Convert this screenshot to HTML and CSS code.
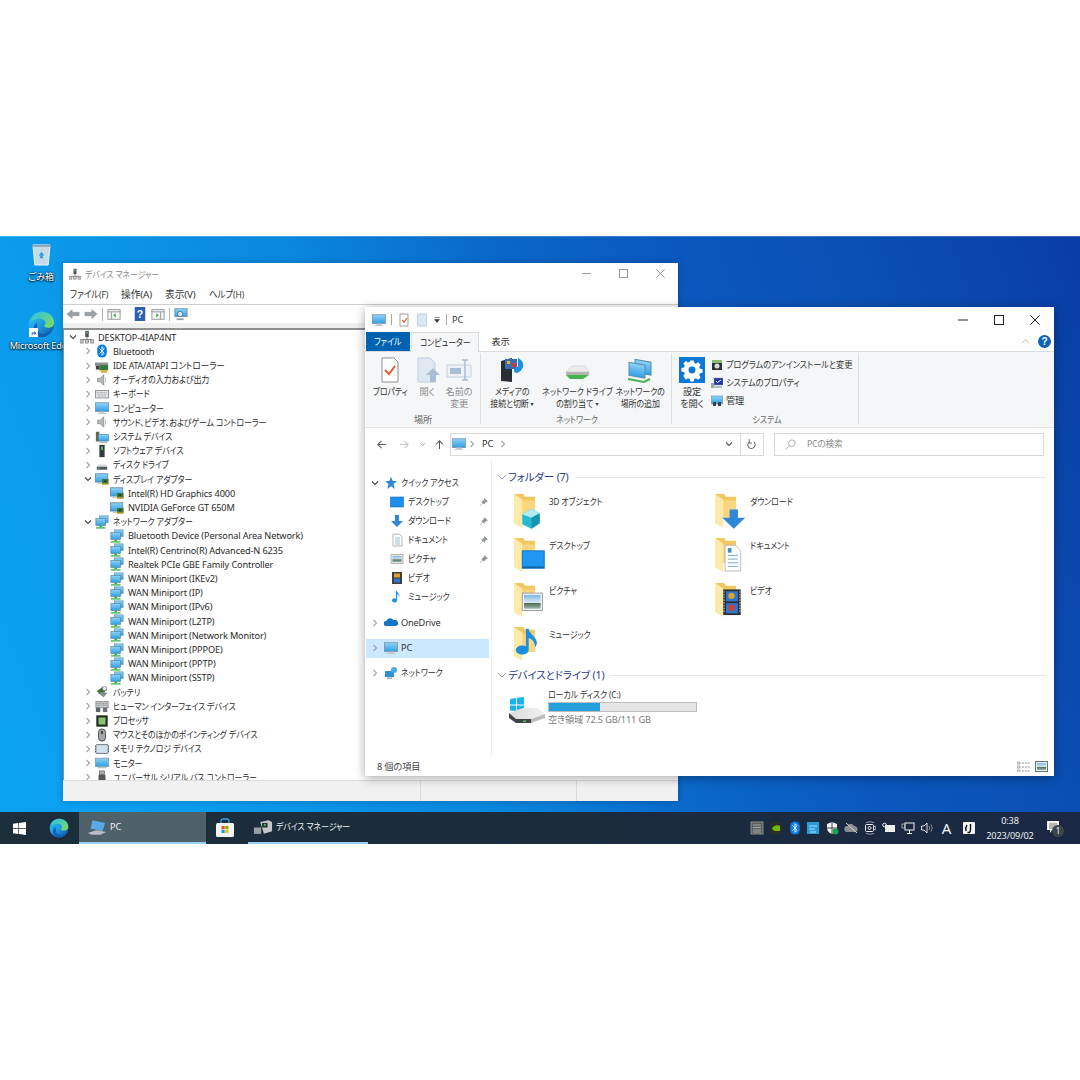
FILE: index.html
```html
<!DOCTYPE html>
<html lang="ja">
<head>
<meta charset="utf-8">
<title>デバイス マネージャー と PC</title>
<link rel="stylesheet" href="styles.css">
</head>
<body>
<svg class="defs" xmlns="http://www.w3.org/2000/svg">
  <defs>
    <linearGradient id="scr" x1="0" y1="0" x2="0" y2="1"><stop offset="0" stop-color="#8fd3f7"/><stop offset="1" stop-color="#2f9fe6"/></linearGradient>
    <linearGradient id="edgeg" x1="0" y1="0" x2="1" y2="1"><stop offset="0" stop-color="#35c1f1"/><stop offset=".5" stop-color="#1b9de2"/><stop offset="1" stop-color="#114a9a"/></linearGradient>
    <linearGradient id="edgeh" x1="0" y1="0" x2="1" y2="1"><stop offset="0" stop-color="#2bc4e8"/><stop offset="1" stop-color="#7fdc5a"/></linearGradient>
    <linearGradient id="hdd" x1="0" y1="0" x2="1" y2="0"><stop offset="0" stop-color="#dcdcdc"/><stop offset="1" stop-color="#f1f1f1"/></linearGradient>
    <linearGradient id="pic" x1="0" y1="0" x2="0" y2="1"><stop offset="0" stop-color="#7db8e6"/><stop offset=".55" stop-color="#d8e8ef"/><stop offset=".6" stop-color="#4d6b55"/><stop offset="1" stop-color="#9fb6b0"/></linearGradient>

    <symbol id="chr" viewBox="0 0 8 8"><path d="M2.500 1 5.500 4 2.500 7" fill="none" stroke="#a3a3a3" stroke-width="1.100"/></symbol>
    <symbol id="chd" viewBox="0 0 8 8"><path d="M1 2.500 4 5.500 7 2.500" fill="none" stroke="#444" stroke-width="1.100"/></symbol>
    <symbol id="chg" viewBox="0 0 10 10"><path d="M1 3 5 7 9 3" fill="none" stroke="#8a93a8" stroke-width=".9"/></symbol>

    <symbol id="mon" viewBox="0 0 16 16"><rect x=".5" y="2" width="15" height="10" fill="url(#scr)" stroke="#7c98ad"/><rect x="5" y="12" width="6" height="1.500" fill="#b4bec6"/><rect x="3" y="13.500" width="10" height="1.500" fill="#c8ced3"/></symbol>
    <symbol id="net" viewBox="0 0 16 16"><rect x="5" y="1" width="10" height="7.500" fill="url(#scr)" stroke="#6c93ad" stroke-width=".8"/><rect x="1" y="4" width="11" height="8" fill="url(#scr)" stroke="#5e87a3" stroke-width=".8"/><rect x="5" y="12" width="3" height="2" fill="#3fae3f"/><rect x="1" y="14" width="11" height="1.500" fill="#39b54a"/></symbol>
    <symbol id="disp" viewBox="0 0 16 16"><rect x=".5" y="2" width="14" height="9.500" fill="url(#scr)" stroke="#6a8aa0"/><rect x="3" y="11.500" width="7" height="2" fill="#b4bec6"/><rect x="8" y="8" width="7.500" height="6" fill="#3c7a3a"/><rect x="8" y="13" width="7.500" height="1.500" fill="#d6a520"/><rect x="10" y="9.500" width="3" height="2" fill="#1f3f1f"/></symbol>
    <symbol id="spk" viewBox="0 0 16 16"><path d="M3 6h3l4-4v12l-4-4H3z" fill="#b5b9bc" stroke="#70767b" stroke-width=".7"/><path d="M12 5v6" stroke="#c6c9cc" stroke-width="1.200"/></symbol>
    <symbol id="bt" viewBox="0 0 16 16"><rect x="2.500" y=".5" width="11" height="15" rx="5.500" fill="#0a7ce8"/><path d="M5 5l5.500 5.500L8 13V3l2.500 2.500L5 11" fill="none" stroke="#fff" stroke-width="1"/></symbol>
    <symbol id="ide" viewBox="0 0 16 16"><rect x="0" y="4" width="15" height="4" fill="#8d9196"/><rect x="5" y="7" width="10" height="6" fill="#2f7a3a"/><rect x="7" y="13" width="7" height="2.500" fill="#e4a21c"/><rect x="1" y="8" width="4" height="4" fill="#3b3f44"/></symbol>
    <symbol id="kb" viewBox="0 0 16 16"><rect x=".5" y="4" width="15" height="8.500" fill="#e6e7e8" stroke="#8a8d90"/><path d="M2 6.200h12M2 8.200h12M3 10.400h10" stroke="#8e9193" stroke-dasharray="1 .7"/></symbol>
    <symbol id="sys" viewBox="0 0 16 16"><rect x="1" y="2" width="4" height="11" fill="#5f6b4f"/><rect x="4" y="5" width="11.500" height="7.500" fill="url(#scr)" stroke="#4d7f9e" stroke-width=".7"/><rect x="5" y="13" width="9" height="1.600" fill="#9aa9b3"/></symbol>
    <symbol id="sw" viewBox="0 0 16 16"><rect x="5" y="1" width="6" height="14" fill="#34383c"/><rect x="7" y="3" width="2" height="4" fill="#49d24e"/></symbol>
    <symbol id="dsk" viewBox="0 0 16 16"><path d="M2 10 4 7.500h8L14 10z" fill="#d5d7d9"/><rect x="2" y="10" width="12" height="3.400" fill="#50565b"/><rect x="3" y="11.200" width="2" height="1" fill="#7fd37f"/></symbol>
    <symbol id="bat" viewBox="0 0 16 16"><path d="M2 7 9 2l5 3-7 6z" fill="#3a6e35"/><path d="M3 9l7 5 4-5-4-1z" fill="#888d8f"/><circle cx="11" cy="4" r="2.500" fill="#e8eef0" stroke="#55595c" stroke-width=".6"/></symbol>
    <symbol id="hid" viewBox="0 0 16 16"><rect x="1" y="3" width="14" height="7" fill="#c9ccce" stroke="#6a6e72" stroke-width=".7"/><path d="M2 5h12M2 7h12" stroke="#777" stroke-dasharray="1 .8"/><rect x="1" y="10" width="5" height="5" fill="#5b6268"/><rect x="9" y="10" width="5" height="5" fill="#68727a"/></symbol>
    <symbol id="cpu" viewBox="0 0 16 16"><rect x="1.500" y="1.500" width="13" height="13" fill="#232d22"/><rect x="4" y="4" width="8" height="8" fill="#86c46f"/></symbol>
    <symbol id="mou" viewBox="0 0 16 16"><rect x="4" y="1" width="8" height="14" rx="4" fill="#a2a8ad" stroke="#3d4144"/><rect x="7" y="3" width="2" height="4" rx="1" fill="#2f3336"/></symbol>
    <symbol id="mem" viewBox="0 0 16 16"><rect x="1" y="3" width="14" height="10" rx="1" fill="#cfe3ee" stroke="#60686e"/><path d="M0 5h1M0 8h1M0 11h1M15 5h1M15 8h1M15 11h1" stroke="#33383c"/></symbol>
    <symbol id="scrn" viewBox="0 0 16 16"><rect x=".5" y="2.500" width="15" height="9.500" fill="url(#scr)" stroke="#79a0ba"/><rect x="3" y="12.500" width="10" height="1.600" fill="#b8c2ca"/></symbol>
    <symbol id="usb" viewBox="0 0 16 16"><rect x="5" y="1" width="6" height="4" fill="#a8acb0" stroke="#45494c" stroke-width=".6"/><rect x="4" y="5" width="8" height="10" rx="1.500" fill="#55595d"/></symbol>
    <symbol id="dm" viewBox="0 0 16 16"><rect x="6" y="1" width="4" height="7" fill="#4b5054"/><rect x="7" y="2" width="2" height="2" fill="#5cc45c"/><path d="M8 8v3M2 11h12" stroke="#777"/><rect x="0" y="11" width="4" height="4" fill="#bdbdbd" stroke="#666" stroke-width=".5"/><rect x="6" y="11" width="4" height="4" fill="#bdbdbd" stroke="#666" stroke-width=".5"/><rect x="12" y="11" width="4" height="4" fill="#bdbdbd" stroke="#666" stroke-width=".5"/></symbol>

    <symbol id="folder" viewBox="0 0 36 40"><path d="M0 2h10l2 3h11v24H0z" fill="#f0c862"/><path d="M8 9h15v20H8z" fill="#f7d67f"/><path d="M0 2l9 6v31l-9-5z" fill="#fde9a8"/></symbol>
    <symbol id="edge" viewBox="0 0 32 32"><circle cx="16" cy="16" r="15" fill="url(#edgeg)"/><path d="M3 12C5 4 12 1 17 1c8 0 14 6 14 13 0 4-3 6-7 6-3 0-5-1-5-3 2-1 2-3 1-5-2-3-7-4-11-2-3 1-5 2-6 2z" fill="url(#edgeh)"/><path d="M11 20c0 4 3 7 8 7 3 0 5-1 7-2-2 4-6 6-10 6-4 0-7-2-9-5-2-4 0-10 4-12-1 2 0 4 0 6z" fill="#0e5fb8"/></symbol>
    <symbol id="win" viewBox="0 0 16 16"><path d="M0 2.200 6.600 1.300V7.500H0zM7.400 1.200 16 0V7.500H7.400zM0 8.400H6.600V14.700L0 13.800zM7.400 8.400H16V16L7.400 14.800z" fill="#fff"/></symbol>
    <symbol id="gear" viewBox="0 0 24 24"><path fill="#fff" fill-rule="evenodd" d="M10 1h4l.6 3 2 .9 2.600-1.700 2.800 2.800-1.700 2.600.9 2 3 .6v4l-3 .6-.9 2 1.700 2.600-2.800 2.800-2.600-1.700-2 .9-.6 3h-4l-.6-3-2-.9-2.600 1.700L2 18.900l1.700-2.600-.9-2-3-.6v-4l3-.6.9-2L2 4.400 4.800 1.600l2.600 1.700 2-.9zM12 8a4 4 0 1 0 0 8 4 4 0 0 0 0-8z" transform="translate(2.400 2.400) scale(.8)"/></symbol>
    <symbol id="pinm" viewBox="0 0 8 8"><path d="M5 .5 7.500 3 6 3.500 4.500 5.500 2.500 3.500 4.500 2zM3.500 4.500 1 7" fill="#8d959d" stroke="#8d959d" stroke-width=".6"/></symbol>
  </defs>
</svg>

<main class="screen">
  <section class="desktop">
    <div class="desk-icon recycle">
      <svg class="recycle-ic" viewBox="0 0 22 24"><path d="M2 2h18l-2 21H4z" fill="#c6dbe8" stroke="#eef5f9"/><path d="M1 2h20v2H1z" fill="#8ea3b3"/><path d="M8 13l3-4 3 4-2 0 1 3H9l1-3z" fill="#2f9fd8"/></svg>
      <span class="desk-label">ごみ箱</span>
    </div>
    <div class="desk-icon edge-shortcut">
      <span class="edge-box"><svg class="edge-ic"><use href="#edge"/></svg><svg class="shortcut" viewBox="0 0 10 10"><rect width="10" height="10" fill="#fff"/><path d="M3 8V5h3V3l2 3-2 2V6H4v2z" fill="#1a5fb0"/></svg></span>
      <span class="desk-label">Microsoft Edge</span>
    </div>

    <article class="window devmgr">
      <header class="dm-title">
        <svg class="ic12"><use href="#dm"/></svg>
        <span class="dm-title-text ja">デバイス マネージャー</span>
        <span class="spacer"></span>
        <span class="ctl-row dm-ctl">
          <svg class="ctl" viewBox="0 0 10 10"><path d="M0 5h10" stroke="#8d8d8d"/></svg>
          <svg class="ctl" viewBox="0 0 10 10"><rect x=".5" y=".5" width="9" height="9" fill="none" stroke="#8d8d8d"/></svg>
          <svg class="ctl" viewBox="0 0 10 10"><path d="M.5.5l9 9M9.500.5l-9 9" stroke="#8d8d8d"/></svg>
        </span>
      </header>
      <nav class="dm-menu"><span class="ja">ファイル(F)</span><span>操作(A)</span><span>表示(V)</span><span class="ja">ヘルプ(H)</span></nav>
      <div class="dm-tools">
        <svg class="tool" viewBox="0 0 16 16"><path d="M1 8l6-5v3h8v4H7v3z" fill="#9aa0a4" stroke="#7b8084" stroke-width=".5"/></svg>
        <svg class="tool" viewBox="0 0 16 16"><path d="M15 8 9 3v3H1v4h8v3z" fill="#9aa0a4" stroke="#7b8084" stroke-width=".5"/></svg>
        <i class="tsep"></i>
        <svg class="tool" viewBox="0 0 16 16"><rect x="1" y="3" width="14" height="11" fill="#f4f4f4" stroke="#8d9093"/><path d="M1 5.500h14M5 5.500V14" stroke="#8d9093"/><path d="M7 9.500l3-2.500v5z" fill="#45a845"/></svg>
        <svg class="tool help" viewBox="0 0 16 16"><rect x="2" y="0" width="12" height="16" fill="#2d5fb5"/><text x="8" y="13" text-anchor="middle" font-size="12" font-weight="700" fill="#fff" font-family="Liberation Sans">?</text></svg>
        <svg class="tool" viewBox="0 0 16 16"><rect x="1" y="3" width="14" height="11" fill="#f4f4f4" stroke="#8d9093"/><path d="M1 5.500h14M11 5.500V14" stroke="#8d9093"/><path d="M9 9.500 6 7v5z" fill="#45a845"/></svg>
        <i class="tsep"></i>
        <svg class="tool" viewBox="0 0 16 16"><rect x="1" y="2" width="14" height="9" fill="url(#scr)" stroke="#6d93ad"/><path d="M3 14h8" stroke="#93a0aa" stroke-width="2"/><circle cx="7" cy="8" r="3" fill="#d7ecf8" stroke="#57738a"/></svg>
      </div>
      <div class="dm-tree">
        <div class="row"><svg class="chev"><use href="#chd"/></svg><svg class="ic"><use href="#dm"/></svg><span>DESKTOP-4IAP4NT</span></div>
        <div class="row l1"><svg class="chev"><use href="#chr"/></svg><svg class="ic"><use href="#bt"/></svg><span>Bluetooth</span></div>
        <div class="row l1"><svg class="chev"><use href="#chr"/></svg><svg class="ic"><use href="#ide"/></svg><span class="jm">IDE ATA/ATAPI コントローラー</span></div>
        <div class="row l1"><svg class="chev"><use href="#chr"/></svg><svg class="ic"><use href="#spk"/></svg><span class="ja">オーディオの入力および出力</span></div>
        <div class="row l1"><svg class="chev"><use href="#chr"/></svg><svg class="ic"><use href="#kb"/></svg><span class="ja">キーボード</span></div>
        <div class="row l1"><svg class="chev"><use href="#chr"/></svg><svg class="ic"><use href="#mon"/></svg><span class="ja">コンピューター</span></div>
        <div class="row l1"><svg class="chev"><use href="#chr"/></svg><svg class="ic"><use href="#spk"/></svg><span class="ja">サウンド、ビデオ、およびゲーム コントローラー</span></div>
        <div class="row l1"><svg class="chev"><use href="#chr"/></svg><svg class="ic"><use href="#sys"/></svg><span class="ja">システム デバイス</span></div>
        <div class="row l1"><svg class="chev"><use href="#chr"/></svg><svg class="ic"><use href="#sw"/></svg><span class="ja">ソフトウェア デバイス</span></div>
        <div class="row l1"><svg class="chev"><use href="#chr"/></svg><svg class="ic"><use href="#dsk"/></svg><span class="ja">ディスク ドライブ</span></div>
        <div class="row l1"><svg class="chev"><use href="#chd"/></svg><svg class="ic"><use href="#disp"/></svg><span class="ja">ディスプレイ アダプター</span></div>
        <div class="row l2"><i class="chev"></i><svg class="ic"><use href="#disp"/></svg><span>Intel(R) HD Graphics 4000</span></div>
        <div class="row l2"><i class="chev"></i><svg class="ic"><use href="#disp"/></svg><span>NVIDIA GeForce GT 650M</span></div>
        <div class="row l1"><svg class="chev"><use href="#chd"/></svg><svg class="ic"><use href="#net"/></svg><span class="ja">ネットワーク アダプター</span></div>
        <div class="row l2"><i class="chev"></i><svg class="ic"><use href="#net"/></svg><span>Bluetooth Device (Personal Area Network)</span></div>
        <div class="row l2"><i class="chev"></i><svg class="ic"><use href="#net"/></svg><span>Intel(R) Centrino(R) Advanced-N 6235</span></div>
        <div class="row l2"><i class="chev"></i><svg class="ic"><use href="#net"/></svg><span>Realtek PCIe GBE Family Controller</span></div>
        <div class="row l2"><i class="chev"></i><svg class="ic"><use href="#net"/></svg><span>WAN Miniport (IKEv2)</span></div>
        <div class="row l2"><i class="chev"></i><svg class="ic"><use href="#net"/></svg><span>WAN Miniport (IP)</span></div>
        <div class="row l2"><i class="chev"></i><svg class="ic"><use href="#net"/></svg><span>WAN Miniport (IPv6)</span></div>
        <div class="row l2"><i class="chev"></i><svg class="ic"><use href="#net"/></svg><span>WAN Miniport (L2TP)</span></div>
        <div class="row l2"><i class="chev"></i><svg class="ic"><use href="#net"/></svg><span>WAN Miniport (Network Monitor)</span></div>
        <div class="row l2"><i class="chev"></i><svg class="ic"><use href="#net"/></svg><span>WAN Miniport (PPPOE)</span></div>
        <div class="row l2"><i class="chev"></i><svg class="ic"><use href="#net"/></svg><span>WAN Miniport (PPTP)</span></div>
        <div class="row l2"><i class="chev"></i><svg class="ic"><use href="#net"/></svg><span>WAN Miniport (SSTP)</span></div>
        <div class="row l1"><svg class="chev"><use href="#chr"/></svg><svg class="ic"><use href="#bat"/></svg><span class="ja">バッテリ</span></div>
        <div class="row l1"><svg class="chev"><use href="#chr"/></svg><svg class="ic"><use href="#hid"/></svg><span class="ja">ヒューマン インターフェイス デバイス</span></div>
        <div class="row l1"><svg class="chev"><use href="#chr"/></svg><svg class="ic"><use href="#cpu"/></svg><span class="ja">プロセッサ</span></div>
        <div class="row l1"><svg class="chev"><use href="#chr"/></svg><svg class="ic"><use href="#mou"/></svg><span class="ja">マウスとそのほかのポインティング デバイス</span></div>
        <div class="row l1"><svg class="chev"><use href="#chr"/></svg><svg class="ic"><use href="#mem"/></svg><span class="ja">メモリ テクノロジ デバイス</span></div>
        <div class="row l1"><svg class="chev"><use href="#chr"/></svg><svg class="ic"><use href="#scrn"/></svg><span class="ja">モニター</span></div>
        <div class="row l1"><svg class="chev"><use href="#chr"/></svg><svg class="ic"><use href="#usb"/></svg><span class="ja">ユニバーサル シリアル バス コントローラー</span></div>
      </div>
      <footer class="dm-status"><i></i><i></i><i></i></footer>
    </article>

    <article class="window explorer">
      <header class="ex-title">
        <svg class="ic14"><use href="#mon"/></svg>
        <i class="qsep"></i>
        <svg class="ic14" viewBox="0 0 14 14"><path d="M3 1h8v12H3z" fill="#fff" stroke="#9d9d9d"/><path d="M5 7l2 2 3-4" fill="none" stroke="#e8582a" stroke-width="1.200"/></svg>
        <svg class="ic14 gap4" viewBox="0 0 14 14"><path d="M2.500 1h9v12h-9z" fill="#dbe6f3" stroke="#c3d0df"/></svg>
        <svg class="qdown" viewBox="0 0 8 8"><path d="M1 1.500h6M1.500 3.500h5L4 6.500z" fill="#333" stroke="#333" stroke-width=".5"/></svg>
        <i class="qsep"></i>
        <span class="ex-name">PC</span>
        <span class="spacer"></span>
        <span class="ctl-row ex-ctl">
          <svg class="ctl" viewBox="0 0 10 10"><path d="M0 5h10" stroke="#222"/></svg>
          <svg class="ctl" viewBox="0 0 10 10"><rect x=".5" y=".5" width="9" height="9" fill="none" stroke="#222"/></svg>
          <svg class="ctl" viewBox="0 0 10 10"><path d="M.5.5l9 9M9.500.5l-9 9" stroke="#222"/></svg>
        </span>
      </header>
      <div class="ex-tabs">
        <span class="tab-file"><b class="jc">ファイル</b></span>
        <span class="tab-on"><b class="jc">コンピューター</b></span>
        <span class="tab"><b>表示</b></span>
        <span class="spacer"></span>
        <svg class="caret" viewBox="0 0 10 10"><path d="M1 7l4-4 4 4" fill="none" stroke="#b4b4b4"/></svg>
        <span class="help-dot">?</span>
      </div>
      <div class="ribbon">
        <section class="rgroup g1">
          <div class="rbtns">
            <div class="rbtn w48"><svg class="rico" viewBox="0 0 26 26"><path d="M5 1h12l4 4v20H5z" fill="#fff" stroke="#8f8f8f"/><path d="M8 13l4 4 6-8" fill="none" stroke="#e8582a" stroke-width="2"/></svg><span class="jc">プロパティ</span></div>
            <div class="rbtn w26 off"><svg class="rico" viewBox="0 0 26 26"><path d="M4 1h12l5 5v19H4z" fill="#dfe8f2" stroke="#c2cfdd"/><path d="M16 25v-7h-4l7-7 7 7h-4v7z" fill="#a9bdd3"/></svg><span>開く</span></div>
            <div class="rbtn w38 off"><svg class="rico" viewBox="0 0 26 26"><path d="M1 8h24v12H1z" fill="#eef2f6" stroke="#c2cfdd"/><rect x="4" y="11" width="11" height="6" fill="#a9bdd3"/><path d="M19 3v20M16 3h6M16 23h6" stroke="#a9bdd3" stroke-width="1.500" fill="none"/></svg><span>名前の<br>変更</span></div>
          </div>
          <p class="rlabel">場所</p>
        </section>
        <section class="rgroup g2">
          <div class="rbtns">
            <div class="rbtn w58"><svg class="rico" viewBox="0 0 26 26"><path d="M2 4 13 1v24L2 24z" fill="#2a2f36"/><rect x="6" y="2" width="12" height="10" fill="#3e6bb0"/><rect x="8" y="4" width="3" height="3" fill="#e3b23b"/><rect x="13" y="6" width="4" height="4" fill="#c23f3f"/><path d="M19 1c4 2 6 5 5 9-1 3-3 5-6 6-3 0-4-3-2-5 1-1 2-1 3-1z" fill="#1b8fe0"/></svg><span class="jc">メディアの<br>接続と切断 <b class="drop"></b></span></div>
            <div class="rbtn w72"><svg class="rico" viewBox="0 0 26 26"><path d="M2 15l6-6h13l4 6z" fill="#ececec" stroke="#bcbcbc" stroke-width=".5"/><path d="M2 15h23v3H2z" fill="#b4b4b4"/><path d="M2 18h23l-6 4H6z" fill="#45b54b"/></svg><span class="jc">ネットワーク ドライブ<br>の割り当て <b class="drop"></b></span></div>
            <div class="rbtn w54"><svg class="rico" viewBox="0 0 26 26"><rect x="8" y="2" width="16" height="13" fill="url(#scr)" stroke="#5a8aab" transform="skewY(10) translate(0 -1)"/><rect x="2" y="6" width="16" height="13" fill="url(#scr)" stroke="#5a8aab" transform="skewY(10) translate(0 -1)"/><path d="M1 22l16 3 6-3" fill="none" stroke="#49b250" stroke-width="2"/></svg><span class="jc">ネットワークの<br>場所の追加</span></div>
          </div>
          <p class="rlabel jc">ネットワーク</p>
        </section>
        <section class="rgroup g3">
          <div class="rbtns">
            <div class="rbtn w32"><svg class="rico blue"><use href="#gear"/></svg><span>設定<br>を開く</span></div>
            <div class="rsmall">
              <div><svg class="ic12" viewBox="0 0 12 12"><rect x="1" y="1" width="10" height="10" fill="#2d3236"/><rect x="1" y="1" width="10" height="3" fill="#8dbb6a"/><circle cx="6" cy="7" r="2.500" fill="#d9dcdf"/></svg><span class="jx">プログラムのアンインストールと変更</span></div>
              <div><svg class="ic12" viewBox="0 0 12 12"><rect x="3" y="1" width="9" height="7" fill="#2136a8" stroke="#8c98a0" stroke-width=".5"/><path d="M5 4l1.500 1.500L10 3" fill="none" stroke="#fff"/><rect x="0" y="6" width="3" height="5" fill="#9ea4a9"/><rect x="3" y="9" width="8" height="2" fill="#b8c0c6"/></svg><span class="jx">システムのプロパティ</span></div>
              <div><svg class="ic12" viewBox="0 0 12 12"><rect x=".5" y="1" width="11" height="8" fill="url(#scr)" stroke="#6b8faa" stroke-width=".6"/><rect x="2" y="7" width="3" height="4" fill="#3d4347"/><rect x="7" y="7" width="3" height="4" fill="#3d4347"/></svg><span>管理</span></div>
            </div>
          </div>
          <p class="rlabel jc">システム</p>
        </section>
      </div>
      <div class="ex-addr">
        <svg class="nav-ar" viewBox="0 0 12 12"><path d="M11 6H2M6 2 2 6l4 4" fill="none" stroke="#555" stroke-width="1.100"/></svg>
        <svg class="nav-ar dim" viewBox="0 0 12 12"><path d="M1 6h9M6 2l4 4-4 4" fill="none" stroke="#c4c4c4" stroke-width="1.100"/></svg>
        <svg class="nav-dn" viewBox="0 0 8 8"><path d="M1.500 2.500 4 5l2.500-2.500" fill="none" stroke="#888"/></svg>
        <svg class="nav-ar" viewBox="0 0 12 12"><path d="M6 11V2M2 6l4-4 4 4" fill="none" stroke="#555" stroke-width="1.100"/></svg>
        <div class="addr-box">
          <svg class="ic14"><use href="#mon"/></svg>
          <svg class="crumb" viewBox="0 0 8 8"><use href="#chr"/></svg>
          <span class="addr-pc">PC</span>
          <svg class="crumb" viewBox="0 0 8 8"><use href="#chr"/></svg>
          <span class="spacer"></span>
          <svg class="addr-dd" viewBox="0 0 8 8"><path d="M1 2.500 4 5.500 7 2.500" fill="none" stroke="#555" stroke-width="1.100"/></svg>
          <i class="addr-sep"></i>
          <svg class="addr-re" viewBox="0 0 12 12"><path d="M8.500 3.200A4 4 0 1 1 4 2.800" fill="none" stroke="#666" stroke-width="1.100"/><path d="M3.500 0v4.500h3" fill="none" stroke="#666"/></svg>
        </div>
        <div class="search-box">
          <svg class="search-ic" viewBox="0 0 12 12"><circle cx="7.500" cy="4.500" r="3.500" fill="none" stroke="#a8a8a8"/><path d="M5 7 1 11" stroke="#a8a8a8"/></svg>
          <span class="jm">PCの検索</span>
        </div>
      </div>
      <div class="ex-body">
        <aside class="ex-nav">
          <div class="nrow top"><svg class="nchev"><use href="#chd"/></svg><svg class="nic" viewBox="0 0 14 14"><path d="M7 1l1.800 4H13L9.500 8l1.300 5L7 10.300 3.200 13l1.300-5L1 5h4.200z" fill="#2f87d8"/></svg><span class="ja">クイック アクセス</span></div>
          <div class="nrow child"><svg class="nic" viewBox="0 0 14 14"><rect x=".5" y="2" width="13" height="10" fill="#1c8ff0" stroke="#1368b8" stroke-width=".6"/></svg><span class="ja">デスクトップ</span><svg class="pin"><use href="#pinm"/></svg></div>
          <div class="nrow child"><svg class="nic" viewBox="0 0 14 14"><path d="M5 1h4v6h4l-6 6-6-6h4z" fill="#2f87d8"/></svg><span class="ja">ダウンロード</span><svg class="pin"><use href="#pinm"/></svg></div>
          <div class="nrow child"><svg class="nic" viewBox="0 0 14 14"><path d="M3 1h6l3 3v9H3z" fill="#fff" stroke="#999" stroke-width=".7"/><path d="M5 5h5M5 7h5M5 9h5M5 11h5" stroke="#6ea4cf" stroke-width=".7"/></svg><span class="ja">ドキュメント</span><svg class="pin"><use href="#pinm"/></svg></div>
          <div class="nrow child"><svg class="nic" viewBox="0 0 14 14"><rect x="1" y="2.500" width="12" height="9" fill="#e6e6e6" stroke="#9a9a9a" stroke-width=".7"/><rect x="2.500" y="4" width="9" height="6" fill="url(#pic)"/></svg><span class="ja">ピクチャ</span><svg class="pin"><use href="#pinm"/></svg></div>
          <div class="nrow child"><svg class="nic" viewBox="0 0 14 14"><rect x="2" y="1" width="10" height="12" fill="#3a3f44"/><rect x="4" y="2.500" width="6" height="4" fill="#e0a02c"/><rect x="4" y="7.500" width="6" height="4" fill="#2f75c9"/></svg><span class="ja">ビデオ</span></div>
          <div class="nrow child"><svg class="nic" viewBox="0 0 14 14"><path d="M7 1v9.500a2.500 2 0 1 1-1-1.700V1h1c0 2 3 3 3 6-1-2-2-2.500-3-3z" fill="#1b8fe0"/></svg><span class="ja">ミュージック</span></div>
          <div class="nrow drive-root"><svg class="nchev"><use href="#chr"/></svg><svg class="nic" viewBox="0 0 14 14"><path d="M2 10a2.500 2.500 0 0 1 .3-5A4 4 0 0 1 9.500 4 3 3 0 0 1 12 10z" fill="#1274c4"/></svg><span>OneDrive</span></div>
          <div class="nrow sel"><svg class="nchev"><use href="#chr"/></svg><svg class="nic"><use href="#mon"/></svg><span>PC</span></div>
          <div class="nrow net-root"><svg class="nchev"><use href="#chr"/></svg><svg class="nic" viewBox="0 0 14 14"><rect x="1" y="5" width="9" height="6" fill="#2d8fd8"/><circle cx="10" cy="4" r="3" fill="#4fa9e3"/><rect x="3" y="11.500" width="5" height="1.500" fill="#9fa8ad"/></svg><span class="ja">ネットワーク</span></div>
        </aside>
        <div class="ex-main">
          <h2 class="ghead"><svg class="gchev"><use href="#chg"/></svg><span>フォルダー (7)</span><i></i></h2>
          <div class="fgrid">
            <div class="fitem"><svg class="fic" viewBox="0 0 36 40"><use href="#folder" width="36" height="40"/><path d="M9 24l10-6 9 5v11l-9 6-10-5z" fill="#28b9d0"/><path d="M9 24l10-6 9 5-9 5z" fill="#b3ecf2"/><path d="M19 28v12l9-6V23z" fill="#1596b0"/></svg><span class="ja">3D オブジェクト</span></div>
            <div class="fitem"><svg class="fic" viewBox="0 0 36 40"><use href="#folder" width="36" height="40"/><path d="M16 19h9v9h8l-12.500 12L8 28h8z" fill="#2f87d8"/></svg><span class="ja">ダウンロード</span></div>
            <div class="fitem"><svg class="fic" viewBox="0 0 36 40"><use href="#folder" width="36" height="40"/><rect x="9" y="16" width="24" height="19" fill="#2098f3" stroke="#136db8"/><rect x="9.500" y="33" width="23" height="1.500" fill="#0f5e9f"/></svg><span class="ja">デスクトップ</span></div>
            <div class="fitem"><svg class="fic" viewBox="0 0 36 40"><use href="#folder" width="36" height="40"/><path d="M11 10h11l6 6v22H11z" fill="#fff" stroke="#999" stroke-width=".7"/><path d="M14 21h11M14 25h11M14 29h11M14 33h11" stroke="#6ea4cf"/><path d="M14 13l4 0v5h-4z" fill="#3e8ed0"/></svg><span class="ja">ドキュメント</span></div>
            <div class="fitem"><svg class="fic" viewBox="0 0 36 40"><use href="#folder" width="36" height="40"/><rect x="9" y="13" width="22" height="19" fill="#f2f2f2" stroke="#989898"/><rect x="11" y="15" width="18" height="15" fill="url(#pic)"/></svg><span class="ja">ピクチャ</span></div>
            <div class="fitem"><svg class="fic" viewBox="0 0 36 40"><use href="#folder" width="36" height="40"/><rect x="9" y="9" width="19" height="28" fill="#2b2f33"/><rect x="12" y="11" width="13" height="11" fill="#2f75c9"/><rect x="12" y="24" width="13" height="11" fill="#2f75c9"/><circle cx="18" cy="16" r="3.500" fill="#d9a42c"/><circle cx="18" cy="29" r="3.500" fill="#c73f3f"/><path d="M10 11v24M27 11v24" stroke="#d0d0d0" stroke-dasharray="1.500 1.500"/></svg><span class="ja">ビデオ</span></div>
            <div class="fitem"><svg class="fic" viewBox="0 0 36 40"><use href="#folder" width="36" height="40"/><path d="M16 4v23a7 5 0 1 1-3-4V4h3c0 5 8 8 9 15 0 2-1 4-2 5 0-5-3-9-7-10z" fill="#1b8fe0"/></svg><span class="ja">ミュージック</span></div>
          </div>
          <h2 class="ghead second"><svg class="gchev"><use href="#chg"/></svg><span>デバイスとドライブ (1)</span><i></i></h2>
          <div class="drive">
            <svg class="drive-ic" viewBox="0 0 36 28"><path d="M1 3 7 2V8.500H1zM8 1.800 15 1V8.500H8zM1 9.500H7V15L1 14.500zM8 9.500H15V16L8 15.500z" fill="#19b4ef"/><path d="M0 17 14 12H29L36 18 22 23H7z" fill="url(#hdd)"/><path d="M0 17 7 23H22V27H7L0 22z" fill="#3f4448"/><path d="M22 23 36 18V22L22 27z" fill="#bdbdbd"/><rect x="14" y="24.500" width="3" height="1.400" fill="#52c652"/></svg>
            <div class="drive-info">
              <div class="drive-name ja">ローカル ディスク (C:)</div>
              <div class="bar"><div class="bar-fill"></div></div>
              <div class="drive-free">空き領域 72.5 GB/111 GB</div>
            </div>
          </div>
        </div>
      </div>
      <footer class="ex-status">
        <span>8 個の項目</span>
        <span class="spacer"></span>
        <svg class="view" viewBox="0 0 13 11"><path d="M0 1h3v2H0zM0 5h3v2H0zM0 9h3v2H0z" fill="none" stroke="#7f8a93" stroke-width=".7"/><path d="M5 2h8M5 6h8M5 10h8" stroke="#8d96a0" stroke-dasharray="2 .8"/></svg>
        <svg class="view on" viewBox="0 0 13 11"><rect x=".5" y=".5" width="12" height="10" fill="#e8f1f8" stroke="#63727e"/><rect x="2" y="2" width="9" height="7" fill="url(#pic)"/></svg>
      </footer>
    </article>
  </section>

  <footer class="taskbar">
    <svg class="start"><use href="#win"/></svg>
    <svg class="tb-edge"><use href="#edge"/></svg>
    <div class="tb-btn active">
      <svg class="tb-ic" viewBox="0 0 22 18"><path d="M6 1 20 4 17 13 4 10z" fill="#59a9e8"/><path d="M1 15l9-3 11 2-6 3H5z" fill="#b8bfc4"/></svg>
      <span>PC</span>
    </div>
    <svg class="store" viewBox="0 0 20 20"><path d="M6 6V3q0-2 2-2h4q2 0 2 2v3" fill="none" stroke="#27a7e8" stroke-width="1.300"/><rect x="1" y="5" width="18" height="14" rx="1.500" fill="#f3f3f3"/><rect x="6.500" y="8" width="3.200" height="3.200" fill="#f25022"/><rect x="10.300" y="8" width="3.200" height="3.200" fill="#7fba00"/><rect x="6.500" y="11.800" width="3.200" height="3.200" fill="#00a4ef"/><rect x="10.300" y="11.800" width="3.200" height="3.200" fill="#ffb900"/></svg>
    <div class="tb-btn open">
      <svg class="tb-ic" viewBox="0 0 22 18"><path d="M8 3 17 1l4 2v10l-9 3z" fill="#c3c7ca"/><rect x="10" y="4" width="6" height="5" fill="#2d3236"/><rect x="12" y="5" width="2" height="2" fill="#53c653"/><rect x="1" y="9" width="8" height="7" fill="#9a9fa3"/></svg>
      <span class="ja">デバイス マネージャー</span>
    </div>
    <span class="spacer"></span>
    <div class="tray">
      <svg class="ti" viewBox="0 0 14 14"><rect x="1" y="1" width="12" height="12" fill="#5a5f5d" stroke="#8a8e8c"/><path d="M3 4h8M3 6.500h8M3 9h8M3 11h8" stroke="#a7aba8"/></svg>
      <svg class="ti" viewBox="0 0 14 14"><rect x="1" y="1" width="12" height="12" fill="#2b2f2c"/><path d="M3 7q3-4 8-2v5H6Q3 9 3 7z" fill="#76b900"/></svg>
      <svg class="ti" viewBox="0 0 14 14"><use href="#bt" width="14" height="14"/></svg>
      <svg class="ti" viewBox="0 0 14 14"><rect x="1" y="1" width="12" height="12" fill="#2a9bd8"/><path d="M3 5h8M3 8h6M4 11h6" stroke="#a9e2f5"/></svg>
      <svg class="ti" viewBox="0 0 14 14"><path d="M7 1l5 2v4q0 4-5 6-5-2-5-6V3z" fill="#f2f2f2"/><path d="M7 1v12M2 7h10" stroke="#222" stroke-width=".8"/><circle cx="10.500" cy="10.500" r="3" fill="#12a14f"/></svg>
      <svg class="ti" viewBox="0 0 14 14"><path d="M3 11a3 3 0 0 1 .5-6A3.500 3.500 0 0 1 10 5a3 3 0 0 1 1 6z" fill="#8b8f92"/><path d="M2 2l11 10" stroke="#cfd2d4"/></svg>
      <svg class="ti" viewBox="0 0 14 14"><rect x="2.500" y="3.500" width="8" height="7" rx="1" fill="none" stroke="#eee"/><circle cx="6.500" cy="7" r="1.500" fill="none" stroke="#eee"/><path d="M10.500 6l2-1v4l-2-1M3 1.500q4-1.500 8 0M3 12.500q4 1.500 8 0" fill="none" stroke="#ccc" stroke-width=".7"/></svg>
      <svg class="ti" viewBox="0 0 14 14"><rect x="3" y="4" width="10" height="7" fill="#eee"/><circle cx="2.500" cy="4" r="1.800" fill="none" stroke="#eee"/></svg>
      <svg class="ti" viewBox="0 0 14 14"><rect x="4" y="2" width="9" height="7" fill="none" stroke="#eee"/><path d="M8.500 9v3M6 12.500h5" stroke="#eee"/><rect x="1" y="3" width="2.500" height="4" fill="none" stroke="#ccc" stroke-width=".7"/></svg>
      <svg class="ti" viewBox="0 0 14 14"><path d="M1.500 5H4l3-3v10L4 9H1.500z" fill="none" stroke="#eee" stroke-width=".9"/><path d="M9 5q1.500 2 0 4M11 3.500q2.500 3.500 0 7" fill="none" stroke="#aaa" stroke-width=".8"/></svg>
      <span class="ime">A</span>
      <svg class="ti ime-pad" viewBox="0 0 14 14"><rect x="1" y="1" width="12" height="12" rx="1" fill="#f4f4f4"/><path d="M8.500 3v6q0 3-3 2.500M5 4Q3 7 4 10" fill="none" stroke="#111" stroke-width="1.400"/></svg>
    </div>
    <div class="clock"><span>0:38</span><span>2023/09/02</span></div>
    <div class="notif">
      <svg class="notif-ic" viewBox="0 0 14 14"><path d="M1 1h12v9H6l-2 3v-3H1z" fill="#f2f2f2"/><path d="M3 4h8M3 6h8M3 8h5" stroke="#444" stroke-width=".7"/></svg>
      <span class="badge">1</span>
    </div>
  </footer>
</main>
</body>
</html>
```

FILE: styles.css
```css
* { box-sizing: border-box; }
html, body { margin: 0; padding: 0; background: #fff; }
body {
  width: 1080px;
  height: 1080px;
  overflow: hidden;
  font-family: "Noto Sans", "Noto Sans CJK JP", sans-serif;
  font-size: 9.2px;
  letter-spacing: -.14px;
  line-height: 1;
  color: #2c2c2c;
  font-feature-settings: "palt";
}
svg { display: block; flex: none; }
i { font-style: normal; }
b { font-weight: 400; }
.defs { position: absolute; width: 0; height: 0; }
.spacer { flex: 1; }

/* Narrow kana, as the reference's UI font draws them */
.ja { display: inline-block; transform: scaleX(.87); transform-origin: 0 50%; white-space: nowrap; }
.jx { display: inline-block; transform: scaleX(.9); transform-origin: 0 50%; white-space: nowrap; }
.jm { display: inline-block; transform: scaleX(.94); transform-origin: 0 50%; white-space: nowrap; }
.jc { display: inline-block; transform: scaleX(.87); transform-origin: 50% 50%; white-space: nowrap; }

.screen {
  margin-top: 236px;
  width: 1080px;
  height: 608px;
  display: flex;
  flex-direction: column;
}
.desktop {
  position: relative;
  flex: none;
  height: 576px;
  overflow: hidden;
  box-shadow: inset 0 1px 0 rgba(255, 255, 255, .22);
  background: linear-gradient(70deg, #0ba2f2 0%, #0b9cec 16%, #0a88de 38%, #0a66c8 55%, #0a58be 68%, #0a50b4 82%, #0a3da6 100%);
}

.desk-icon {
  position: absolute;
  display: flex;
  flex-direction: column;
  align-items: center;
  width: 70px;
  left: 6px;
}
.recycle { top: 7px; }
.edge-shortcut { top: 75px; }
.recycle-ic { width: 21px; height: 23px; }
.desk-label {
  margin-top: 6px;
  color: #fff;
  white-space: nowrap;
  text-shadow: 0 0 2px #000, 0 1px 2px #000;
}
.edge-box { position: relative; width: 27px; height: 27px; }
.edge-ic { width: 27px; height: 27px; }
.shortcut { position: absolute; left: 1px; bottom: 1px; width: 9px; height: 9px; }
.edge-shortcut .desk-label { margin-top: 3px; }

.window { position: absolute; background: #fff; display: flex; flex-direction: column; }
.devmgr { left: 63px; top: 27px; width: 615px; height: 538px; box-shadow: 0 0 6px rgba(0, 0, 0, .25); }
.explorer { left: 365px; top: 71px; width: 689px; height: 469px; box-shadow: 0 2px 10px rgba(0, 0, 0, .35); }

.ic { width: 14px; height: 14px; }
.ic12 { width: 12px; height: 12px; }
.ic14 { width: 14px; height: 14px; }
.ctl-row { display: flex; align-items: center; }
.ctl { width: 9px; height: 9px; }

.dm-title { height: 22px; display: flex; align-items: center; padding-left: 6px; flex: none; }
.dm-title-text { margin-left: 4px; margin-top: 1px; color: #8c8c8c; }
.dm-ctl { gap: 28px; padding-right: 13px; margin-top: -1px; }
.dm-menu {
  height: 20px; flex: none; display: flex; align-items: center; font-size: 9.800px;
  padding: 1px 0 0 7px; border-bottom: 1px solid #cfcfcf; color: #333;
}
.dm-menu span { width: 51px; }
.dm-menu span:nth-child(2) { width: 44px; }
.dm-menu span:nth-child(3) { width: 44px; }
.dm-tools {
  height: 23px; flex: none; display: flex; align-items: center; padding: 0 0 5px 3px;
  gap: 4px;
  background: linear-gradient(#fff 18px, #efefef 18px);
}
.tool { width: 14px; height: 14px; }
.tool.help { margin-left: 8px; }
.tsep { width: 1px; height: 13px; background: #b5b5b5; }
.dm-tree {
  flex: none;
  height: 452px;
  border-top: 2px solid #8f8f8f;
  border-left: 1px solid #8f8f8f;
  background: #fff;
  overflow: hidden;
  padding: 0 0 0 1px;
  display: grid;
  grid-auto-rows: 14.21px;
  align-content: start;
}
.row { display: flex; align-items: center; white-space: nowrap; color: #2a2a2a; }
.row.l1 { padding-left: 15px; }
.row.l2 { padding-left: 30px; }
.chev { width: 8px; height: 8px; margin: 0 3px 0 4px; }
.row .ic { margin-right: 4px; }
.dm-status {
  flex: none; height: 21px; background: #f1f1f1; border-top: 1px solid #dcdcdc;
  display: flex; margin-top: auto;
}
.dm-status i { border-right: 1px solid #d9d9d9; width: 358px; }
.dm-status i:nth-child(2) { width: 156px; }
.dm-status i:nth-child(3) { width: 1px; border: 0; }

.ex-title { height: 25px; flex: none; display: flex; align-items: center; padding-left: 7px; }
.qsep { width: 1px; height: 11px; background: #a8a8a8; margin: 0 5px; }
.gap4 { margin-left: 4px; }
.qdown { width: 8px; height: 8px; margin-left: 4px; }
.ex-name { color: #333; }
.ex-ctl { gap: 26px; padding-right: 14px; }
.ex-ctl .ctl { width: 10px; height: 10px; }
.ex-tabs { height: 19px; flex: none; display: flex; align-items: stretch; padding-left: 1px; position: relative; }
.tab-file { width: 44px; background: #0063b1; color: #fff; display: flex; align-items: center; justify-content: center; }
.tab-on {
  width: 68px; margin-left: 1px; background: #f5f6f7;
  border: 1px solid #dadbdc; border-bottom: 0;
  display: flex; align-items: center; justify-content: center;
  height: 20px; position: relative; z-index: 1;
}
.tab { width: 43px; display: flex; align-items: center; justify-content: center; }
.caret { width: 9px; height: 9px; align-self: center; margin-right: 8px; }
.help-dot {
  width: 13px; height: 13px; border-radius: 50%; background: #0d63b8; color: #fff;
  font-family: "Liberation Sans", sans-serif; font-weight: 700; font-size: 10px;
  display: flex; align-items: center; justify-content: center; align-self: center;
  margin-right: 3px;
}

.ribbon {
  height: 77px; flex: none; background: #f5f6f7;
  border-top: 1px solid #dadbdc; border-bottom: 1px solid #e4e5e6;
  display: flex; padding-left: 1px;
}
.rgroup {
  display: flex; flex-direction: column; border-right: 1px solid #dcdddf;
  margin: 1px 0 3px; padding-top: 4px;
}
.g1 { width: 115px; }
.g2 { width: 191px; padding-left: 2px; }
.g3 { width: 187px; padding-left: 4px; }
.rbtns { display: flex; flex: 1; }
.rbtn { flex: none; display: flex; flex-direction: column; align-items: center; text-align: center; color: #333; white-space: nowrap; }
.rbtn span { line-height: 12px; margin-top: 3px; }
.rbtn.off { color: #8a8a8a; }
.rico { width: 26px; height: 26px; }
.rico.blue { background: #0a78d7; }
.w48 { width: 48px; } .w26 { width: 26px; } .w38 { width: 38px; }
.w58 { width: 58px; } .w72 { width: 72px; } .w54 { width: 54px; } .w32 { width: 32px; }
.drop {
  display: inline-block; width: 0; height: 0; vertical-align: middle;
  border-left: 2.500px solid transparent; border-right: 2.500px solid transparent; border-top: 3px solid #444;
}
.rsmall { display: flex; flex-direction: column; gap: 4px; margin-left: 3px; padding-top: 1px; }
.rsmall div { display: flex; align-items: center; gap: 3px; height: 14px; white-space: nowrap; color: #333; }
.rlabel { margin: 0; text-align: center; color: #666; }

.ex-addr { height: 32px; flex: none; display: flex; align-items: center; padding-left: 11px; }
.nav-ar { width: 11px; height: 11px; margin-right: 12px; }
.nav-ar.dim { margin-right: 9px; }
.nav-dn { width: 7px; height: 7px; margin-right: 8px; }
.addr-box {
  width: 314px; height: 23px; margin-left: -7px; border: 1px solid #d9d9d9;
  display: flex; align-items: center; padding-left: 1px;
}
.crumb { width: 8px; height: 8px; margin: 0 2px; }
.addr-pc { margin: 0 4px; }
.addr-dd { width: 8px; height: 8px; margin-right: 7px; }
.addr-sep { width: 1px; height: 21px; background: #dcdcdc; }
.addr-re { width: 11px; height: 11px; margin: 0 6px 0 5px; }
.search-box {
  width: 270px; height: 23px; margin-left: 10px; border: 1px solid #d9d9d9;
  display: flex; align-items: center; padding-left: 10px; color: #8a8a8a;
}
.search-ic { width: 11px; height: 11px; margin-right: 11px; }

.ex-body { flex: 1; display: flex; min-height: 0; }
.ex-nav { width: 127px; flex: none; border-right: 1px solid #eeeeee; padding-top: 13.500px; padding-left: 1px; }
.nrow { height: 19px; display: flex; align-items: center; padding-left: 5px; white-space: nowrap; color: #2f2f2f; }
.nchev { width: 8px; height: 8px; margin-right: 5px; }
.nic { width: 14px; height: 14px; margin-right: 3px; }
.nrow.child { padding-left: 24px; width: 122px; }
.nrow.child .nic { margin-right: 4px; }
.pin { margin-left: auto; width: 9px; height: 9px; }
.drive-root { margin-top: 7px; }
.sel { margin-top: 6px; background: #cce8ff; width: 123px; }
.net-root { margin-top: 6px; }

.ex-main { flex: 1; padding: 10px 8px 0 5px; min-width: 0; }
.ghead {
  margin: 0; font: inherit; font-size: 10.500px; height: 14px; color: #1e3a8a;
  display: flex; align-items: center; font-weight: 400;
}
.ghead.second { margin-top: 2px; }
.gchev { width: 10px; height: 10px; margin-right: 1px; }
.ghead i { flex: 1; height: 1px; background: #e3e6ec; margin-left: 6px; }
.fgrid {
  display: grid; grid-template-columns: 201px 201px; grid-auto-rows: 44.300px;
  margin: 5px 0 0 17px;
}
.fitem { display: flex; align-items: flex-start; white-space: nowrap; }
.fic { width: 33px; height: 37px; margin-right: 2px; margin-top: 3px; }
.fitem span { padding-top: 8px; color: #2f2f2f; }
.drive { display: flex; margin: 5px 0 0 12px; align-items: flex-start; }
.drive-ic { width: 36px; height: 28px; margin-top: 9px; margin-right: 3px; overflow: visible; }
.drive-info { width: 149px; }
.drive-name { height: 11px; margin-top: 3px; color: #2f2f2f; }
.bar { height: 10px; background: #e6e6e6; border: 1px solid #bcbcbc; margin-top: 1px; }
.bar-fill { width: 35%; height: 100%; background: #26a0da; }
.drive-free { margin-top: 3px; color: #7a7a7a; white-space: nowrap; }

.ex-status { height: 19px; flex: none; display: flex; align-items: center; padding: 0 6px 0 12px; color: #444; }
.view { width: 13px; height: 11px; margin-left: 5px; }

.taskbar {
  flex: 1; display: flex; align-items: center; position: relative;
  background: linear-gradient(90deg, #1b2e3a 0%, #1b2c3c 50%, #1a2844 100%);
  color: #eef2f4;
}
.start { width: 13px; height: 13px; margin-left: 13px; }
.tb-edge { width: 20px; height: 20px; margin-left: 23px; }
.tb-btn { height: 32px; display: flex; align-items: center; padding-left: 8px; gap: 3px; white-space: nowrap; border-bottom: 2px solid #9bcdf0; }
.tb-btn.active { width: 127px; margin-left: 10px; background: #4f6168; }
.tb-btn.open { width: 120px; margin-left: 13px; padding-left: 5px; }
.tb-ic { width: 20px; height: 17px; }
.store { width: 20px; height: 20px; margin-left: 9px; }
.tray { display: flex; align-items: center; gap: 4.900px; }
.ti { width: 14px; height: 14px; }
.ime { font-size: 15px; color: #f2f2f2; margin: 0 4px 0 3px; }
.ime-pad { margin-left: 2px; }
.clock { display: flex; flex-direction: column; align-items: center; gap: 5px; width: 60px; margin-left: 4px; color: #e9edf0; }
.notif { position: relative; width: 22px; height: 20px; margin: 0 15px 0 3px; }
.notif-ic { width: 14px; height: 14px; margin: 2px 0 0 3px; }
.badge {
  position: absolute; left: 9px; top: 7px; width: 12px; height: 12px; border-radius: 50%;
  background: #3b454d; color: #f2f2f2; font-size: 8px;
  display: flex; align-items: center; justify-content: center;
}
```
